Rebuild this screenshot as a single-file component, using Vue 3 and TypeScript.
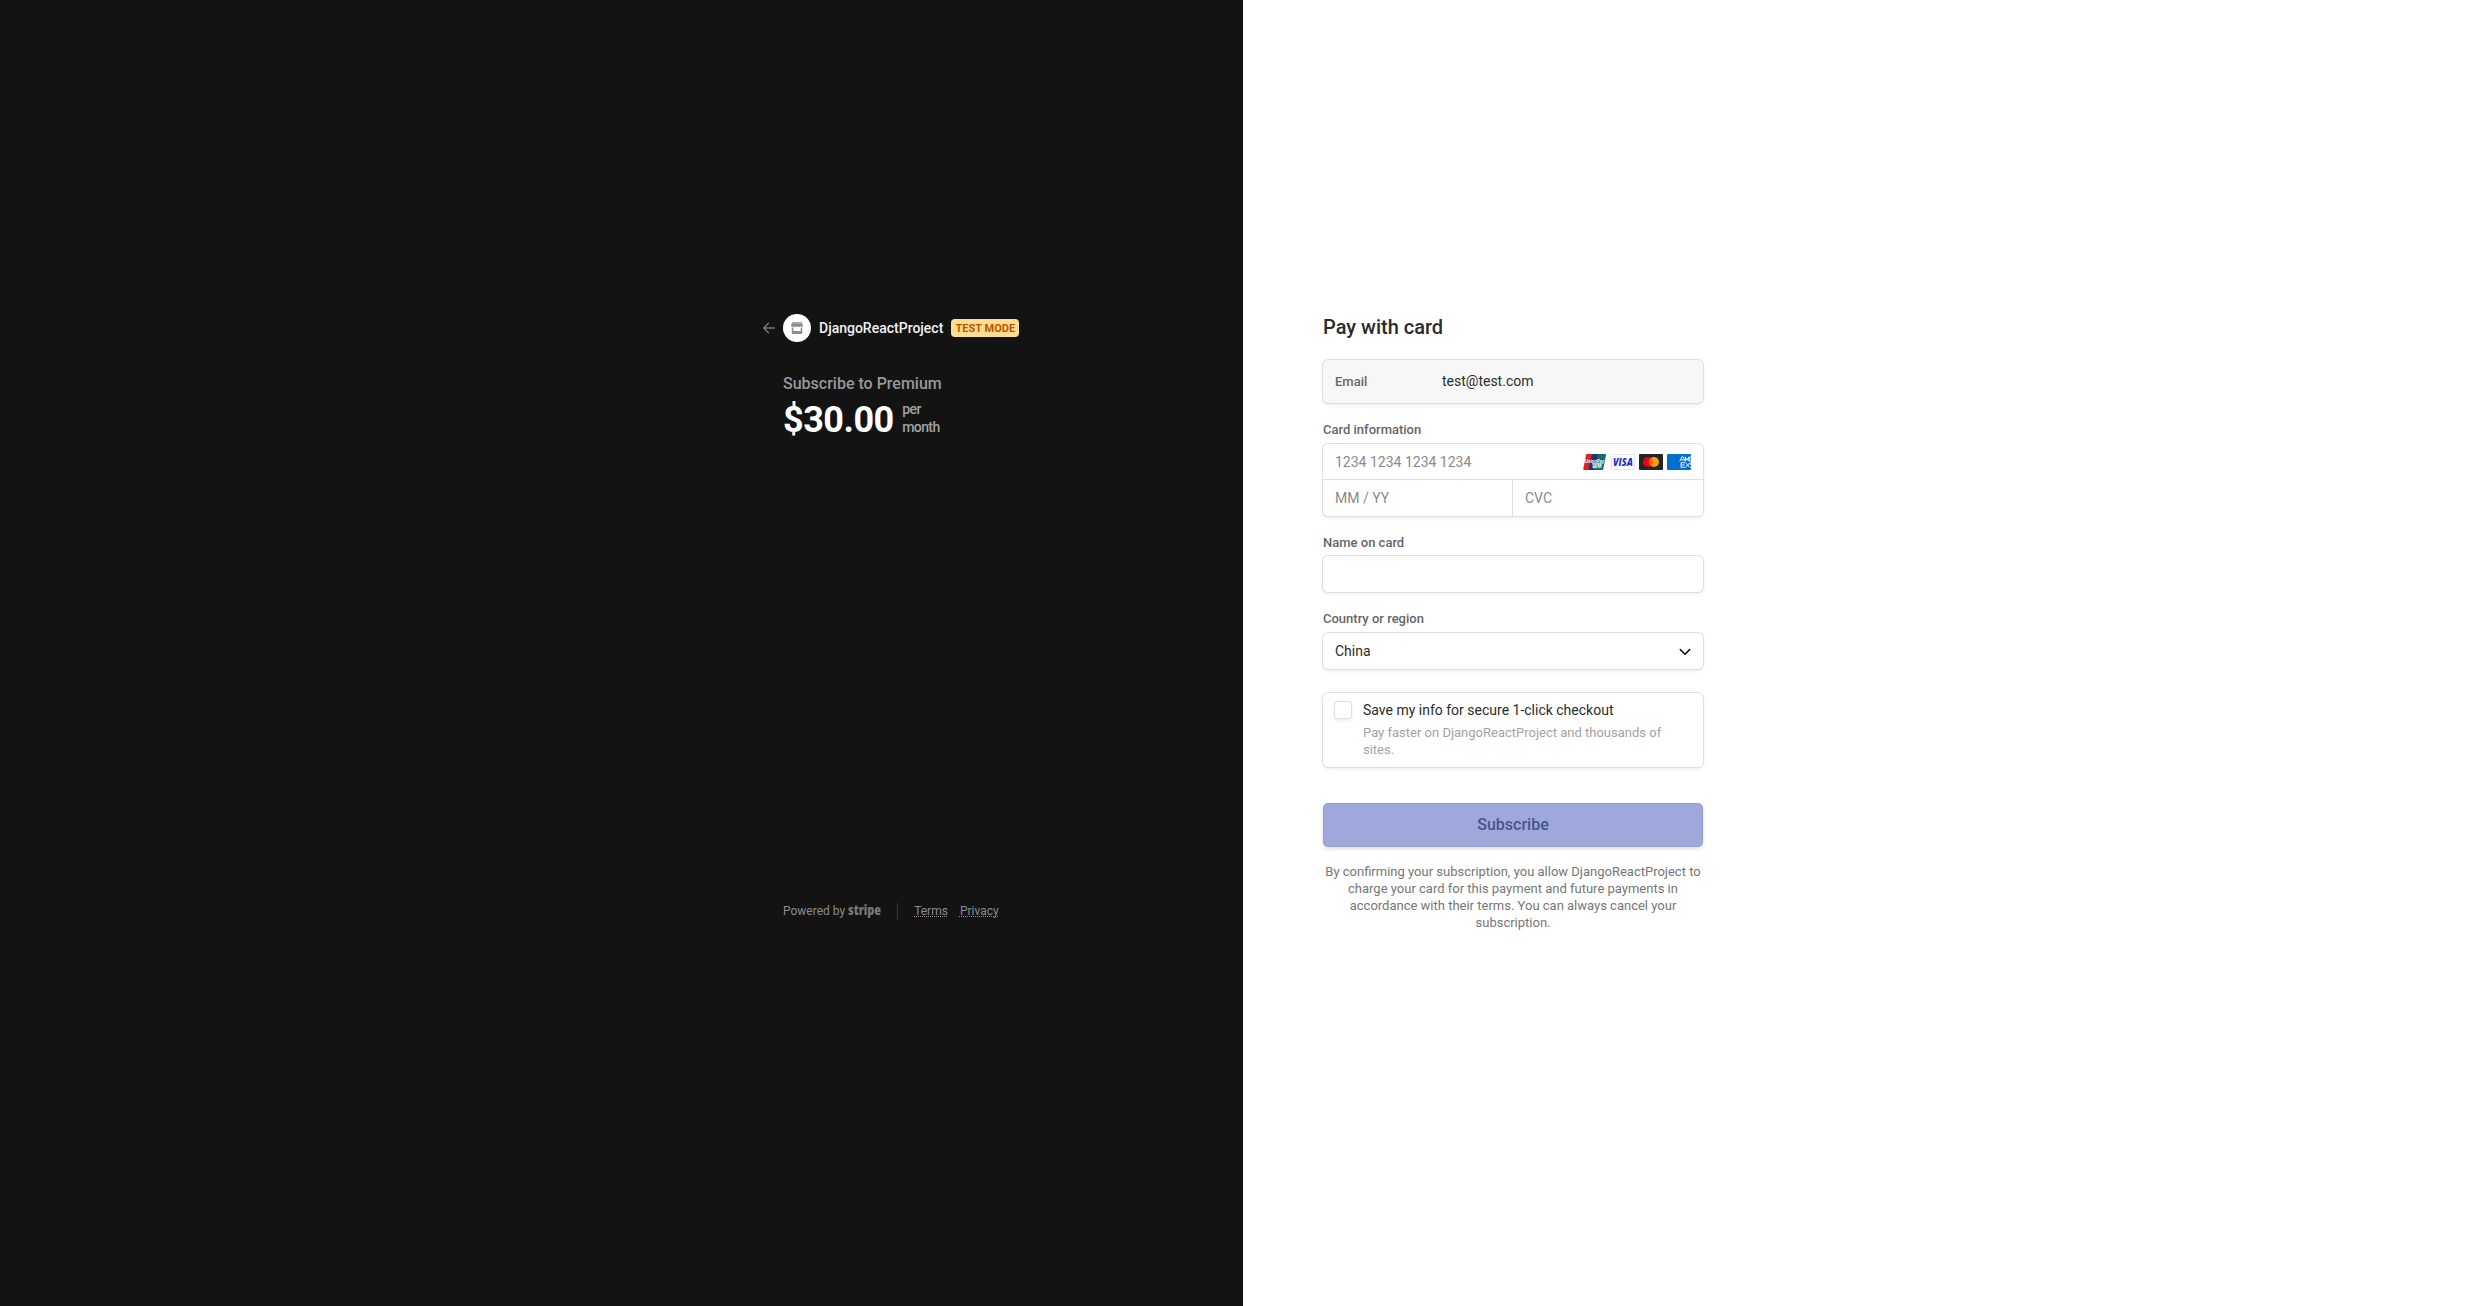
<script setup lang="ts">
const product = 'Subscribe to Premium'
const merchant = 'DjangoReactProject'
</script>

<template>
  <div class="page">
    <section class="summary">
      <header class="merchant">
        <svg class="arrow" width="12" height="12" viewBox="0 0 16 16"><path d="M3.417 7H15a1 1 0 0 1 0 2H3.417l4.591 4.591a1 1 0 0 1-1.415 1.416l-6.3-6.3a1 1 0 0 1 0-1.414l6.3-6.3A1 1 0 0 1 8.008 2.41z" fill="#757575" /></svg>
        <span class="logo">
          <svg width="12" height="12" viewBox="0 0 12 12" fill="#8d8d8d"><path d="M.8 0h10.400v.8H.8zM.8 1.200h10.400L12 3.800a1.300 1.300 0 0 1-2.400.4 1.300 1.300 0 0 1-2.400 0 1.300 1.300 0 0 1-2.400 0 1.300 1.300 0 0 1-2.400 0A1.300 1.300 0 0 1 0 3.800z" /><path d="M.8 5.400h1.500V9h7.400V5.400h1.500V11.200q0 .8-.8.8H1.600q-.8 0-.8-.8z" /></svg>
        </span>
        <span class="name">{{ merchant }}</span>
        <span class="badge">TEST MODE</span>
      </header>
      <div class="product">{{ product }}</div>
      <div class="price">
        <span class="amount">$30.00</span>
        <span class="interval">per<br />month</span>
      </div>
      <footer class="footer">
        <span>Powered by</span>
        <svg class="brand" width="34" height="20" viewBox="0 0 34 20"><text x="0" y="14" textLength="33" lengthAdjust="spacingAndGlyphs">stripe</text></svg>
        <i class="rule"></i>
        <a>Terms</a><a>Privacy</a>
      </footer>
    </section>

    <section class="payment">
      <h1>Pay with card</h1>
      <div class="box email"><span class="key">Email</span><span>test@test.com</span></div>

      <label>Card information</label>
      <div class="box card">
        <div class="number">
          <span>1234 1234 1234 1234</span>
          <div class="brands">
            <svg width="24" height="16" viewBox="0 0 24 16">
              <path d="M3.500 0H10L6.500 16H1.200Q0 16 .3 14.700L3 1Z" fill="#d9222a" />
              <path d="M9 0h7l-3.500 16H5.500z" fill="#21366c" />
              <path d="M15 0h7q1.200 0 1 1.200L20.300 15q-.3 1-1.300 1h-7.500z" fill="#0f6f68" />
              <text x="1.800" y="8.500" class="up" textLength="19.500" lengthAdjust="spacingAndGlyphs">UnionPay</text>
              <text x="9" y="13.300" class="cn" textLength="10" lengthAdjust="spacingAndGlyphs">银联</text>
            </svg>
            <svg width="24" height="16" viewBox="0 0 24 16">
              <rect x=".5" y=".5" width="23" height="15" rx="1" fill="#fff" stroke="#e6e6e6" />
              <text x="2" y="11.600" class="visa" textLength="19.800" lengthAdjust="spacingAndGlyphs">VISA</text>
            </svg>
            <svg width="24" height="16" viewBox="0 0 24 16">
              <rect width="24" height="16" rx="1" fill="#252525" />
              <circle cx="9" cy="8" r="5" fill="#eb001b" /><circle cx="15" cy="8" r="5" fill="#f79e1b" />
              <path d="M12 4a5 5 0 0 1 0 8 5 5 0 0 1 0-8z" fill="#ff5f00" />
            </svg>
            <svg width="24" height="16" viewBox="0 0 24 16">
              <rect width="24" height="16" rx="1" fill="#016fd0" />
              <path d="M12.800 7.300 14.900 2.800h1.200l2 4.500M13.800 5.900h3.400M18.400 7.300V2.900l1.700 3.400 1.700-3.400v4.400M24 3h-1.300v4H24M14 13.300V8.700h4.200M14 11h3.800M14 13.300h4.200M18.600 8.700l4.200 4.600M22.800 8.700l-4.200 4.600M24 8.700q-1.300.3-.8 1.600l.8.700M24 13.300h-1" fill="none" stroke="#fff" stroke-width=".9" />
            </svg>
          </div>
        </div>
        <div class="details"><span>MM / YY</span><span>CVC</span></div>
      </div>

      <label>Name on card</label>
      <div class="box"></div>

      <label class="region">Country or region</label>
      <div class="box country">
        <span>China</span>
        <svg width="12" height="12" viewBox="0 0 12 12"><path d="M10.193 3.970a.75.75 0 0 1 1.062 1.062L6.530 9.756a.75.75 0 0 1-1.062 0L.745 5.032A.75.75 0 0 1 1.807 3.970L6 8.163z" fill="#000" /></svg>
      </div>

      <div class="box save">
        <i class="check"></i>
        <div>
          <div class="save-title">Save my info for secure 1-click checkout</div>
          <p>Pay faster on {{ merchant }} and thousands of sites.</p>
        </div>
      </div>

      <button>Subscribe</button>
      <p class="terms">By confirming your subscription, you allow {{ merchant }} to charge your card for this payment and future payments in accordance with their terms. You can always cancel your subscription.</p>
    </section>
  </div>
</template>

<style>
body { background: #fff; }
</style>

<style scoped>
* { box-sizing: border-box; }
.page { display: flex; width: 2486px; height: 1306px; overflow: hidden; font-family: Roboto, "Liberation Sans", sans-serif; font-size: 14px; color: #2b2b2b; }
.summary { width: 1243px; background: #131313; padding: 314px 0 0 763px; display: flex; flex-direction: column; }
.payment { width: 460px; padding: 315px 0 0 80px; }

.merchant { display: flex; align-items: center; height: 28px; }
.arrow { flex: none; margin-right: 8px; }
.logo { width: 28px; height: 28px; border-radius: 50%; background: #fff; display: flex; align-items: center; justify-content: center; }
.name { margin-left: 8px; color: #f1f1f1; font-weight: 500; }
.badge { margin-left: 8px; width: 68px; height: 18px; line-height: 19px; border-radius: 4px; background: #ffde92; color: #bb5504; font-size: 11px; font-weight: 700; text-align: center; }
.product { margin: 31px 0 0 20px; height: 22px; line-height: 22px; font-size: 16px; font-weight: 500; color: #989898; }
.price { display: flex; align-items: center; margin: 6px 0 0 20px; height: 36px; }
.amount { padding-top: 1px; font-size: 36px; font-weight: 700; line-height: 36px; letter-spacing: -.5px; color: #fff; }
.interval { margin-left: 8.500px; padding-bottom: 3px; font-weight: 500; line-height: 18px; letter-spacing: -.6px; color: #a1a1a1; }
.footer { display: flex; align-items: center; margin: 464px 0 0 20px; height: 20px; font-size: 12px; color: #8b8b8b; }
.brand { display: block; margin-left: 3px; overflow: visible; }
.brand text { font: 800 14px "Open Sans", sans-serif; fill: #777; }
.rule { width: 1px; height: 17px; margin: 0 16px 0 15px; background: #343434; }
.footer a { margin-right: 12px; text-decoration: underline dotted 1px; text-underline-offset: 1px; text-decoration-skip-ink: none; }

h1 { margin: 0 0 20.500px; font-size: 20px; line-height: 24px; font-weight: 500; }
.box { height: 36px; border-radius: 5px; background: #fff; box-shadow: 0 0 0 1px #e0e0e0, 0 2px 4px rgba(0,0,0,.07), 0 1px 1.500px rgba(0,0,0,.05); }
.email { display: flex; align-items: center; height: 43.500px; padding: 0 12px; background: #f7f7f7; }
.key { width: 107px; font-size: 13px; font-weight: 500; color: #666; }
label { display: block; margin-top: 19px; margin-bottom: 5px; height: 16px; line-height: 16px; font-size: 13px; font-weight: 500; color: #666; }
label.region { margin-bottom: 6px; }
.card { height: 72px; margin-top: 6px; color: #8a8a8a; }
.number { display: flex; align-items: center; justify-content: space-between; height: 36px; padding: 0 12px; border-bottom: 1px solid #e0e0e0; }
.brands { display: flex; gap: 4px; }
.brands svg { display: block; }
.up { font: italic 700 5px "Liberation Sans", sans-serif; fill: #fff; }
.cn { font: 700 5px "Noto Sans CJK SC", sans-serif; fill: #fff; }
.visa { font: italic 800 10px "Open Sans", sans-serif; fill: #1a2fd5; }
.details { display: flex; height: 36px; line-height: 36px; }
.details span { width: 189px; padding-left: 12px; }
.details span + span { border-left: 1px solid #e0e0e0; }
.country { display: flex; align-items: center; justify-content: space-between; padding: 0 12px; }
.save { display: flex; height: 74px; margin-top: 24px; padding: 8px 12px; }
.check { flex: none; width: 16px; height: 16px; border-radius: 2px; margin: 1px 12px 0 0; box-shadow: 0 0 0 1px #e0e0e0, 0 2px 4px rgba(0,0,0,.1); }
.save-title { line-height: 18px; }
.save p { margin: 5px 0 0; width: 305px; font-size: 13px; line-height: 17px; color: #a3a3a3; }
button { display: block; width: 380px; height: 44px; margin-top: 36px; padding: 0 0 2px; border: 0; border-radius: 5px; background: #9fa8da; color: #48558a; font: 500 16px Roboto, sans-serif; box-shadow: inset 0 0 0 1px rgba(50,50,93,.08), 0 2px 4px rgba(0,0,0,.13); }
.terms { margin: 16px 0 0; font-size: 13px; line-height: 17px; text-align: center; color: #767676; }
</style>
